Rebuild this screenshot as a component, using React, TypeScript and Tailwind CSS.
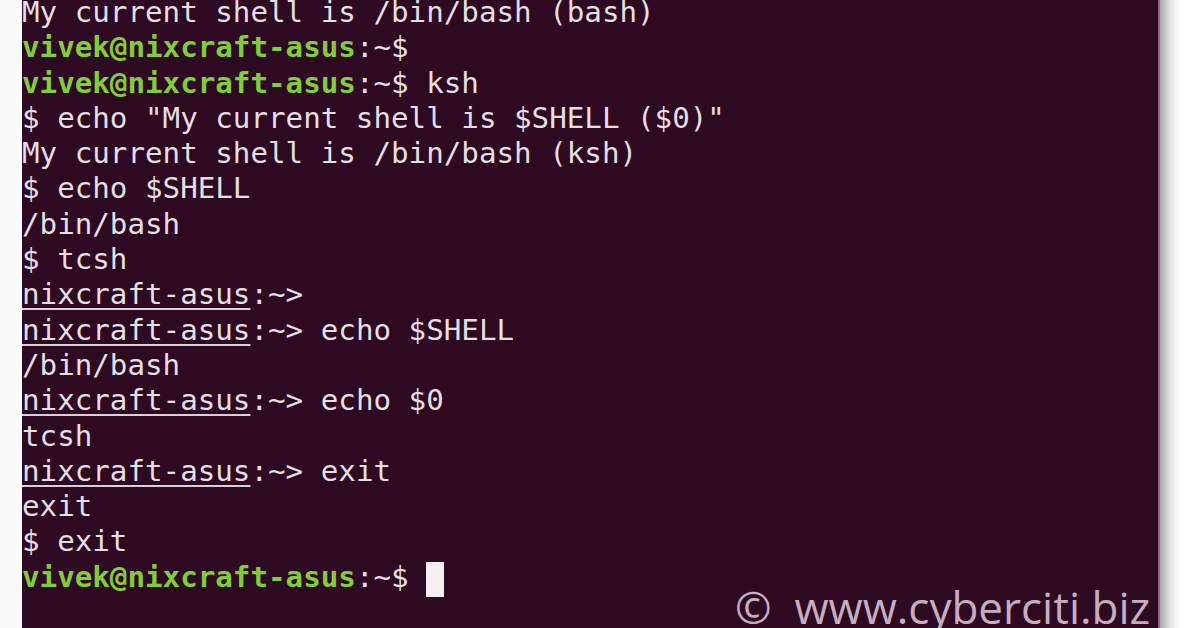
import React from "react";

type Seg = { t: string; k?: "green" | "host" };

const lines: Seg[][] = [
  [{ t: "My current shell is /bin/bash (bash)" }],
  [{ t: "vivek@nixcraft-asus", k: "green" }, { t: ":~$" }],
  [{ t: "vivek@nixcraft-asus", k: "green" }, { t: ":~$ ksh" }],
  [{ t: '$ echo "My current shell is $SHELL ($0)"' }],
  [{ t: "My current shell is /bin/bash (ksh)" }],
  [{ t: "$ echo $SHELL" }],
  [{ t: "/bin/bash" }],
  [{ t: "$ tcsh" }],
  [{ t: "nixcraft-asus", k: "host" }, { t: ":~>" }],
  [{ t: "nixcraft-asus", k: "host" }, { t: ":~> echo $SHELL" }],
  [{ t: "/bin/bash" }],
  [{ t: "nixcraft-asus", k: "host" }, { t: ":~> echo $0" }],
  [{ t: "tcsh" }],
  [{ t: "nixcraft-asus", k: "host" }, { t: ":~> exit" }],
  [{ t: "exit" }],
  [{ t: "$ exit" }],
];

const Segment = ({ s }: { s: Seg }) => {
  if (s.k === "green")
    return <span className="font-bold text-[#84cc3a]">{s.t}</span>;
  if (s.k === "host")
    return (
      <span className="underline decoration-2 underline-offset-[4px] decoration-[#d9cfd6]">
        {s.t}
      </span>
    );
  return <span>{s.t}</span>;
};

export default function App() {
  return (
    <div className="flex h-[628px] w-[1196px] overflow-hidden bg-white">
      {/* left page margin */}
      <div className="w-[22px] shrink-0 bg-[#fbfbfb]" />

      {/* terminal */}
      <div className="relative w-[1136px] shrink-0 overflow-hidden bg-[#2d0a22]">
        <div
          className="mt-[-5px] whitespace-pre text-[29.2px] leading-[35.3px] text-[#e6dfe3]"
          style={{ fontFamily: '"DejaVu Sans Mono", "Liberation Mono", monospace' }}
        >
          {lines.map((l, i) => (
            <div key={i}>
              {l.map((s, j) => (
                <Segment key={j} s={s} />
              ))}
            </div>
          ))}
          <div>
            <span className="font-bold text-[#84cc3a]">vivek@nixcraft-asus</span>
            <span>:~$ </span>
            <span className="relative top-[2px] inline-block h-[35px] w-[18px] bg-[#f4f0f2] align-top" />
          </div>
        </div>

        {/* watermark */}
        <div
          className="absolute left-[713px] top-[585px] whitespace-nowrap text-[44px] leading-none text-[#c6aec0]"
          style={{ fontFamily: '"Open Sans", "Noto Sans", sans-serif' }}
        >
          ©&nbsp;&nbsp;www.cyberciti.biz
        </div>
      </div>

      {/* right page edge */}
      <div className="flex flex-1">
        <div className="w-[2px] bg-[#8a6b80]" />
        <div className="w-[20px] bg-gradient-to-r from-[#a8a8a8] via-[#e2e2e2] to-white" />
        <div className="flex-1 bg-white" />
      </div>
    </div>
  );
}
